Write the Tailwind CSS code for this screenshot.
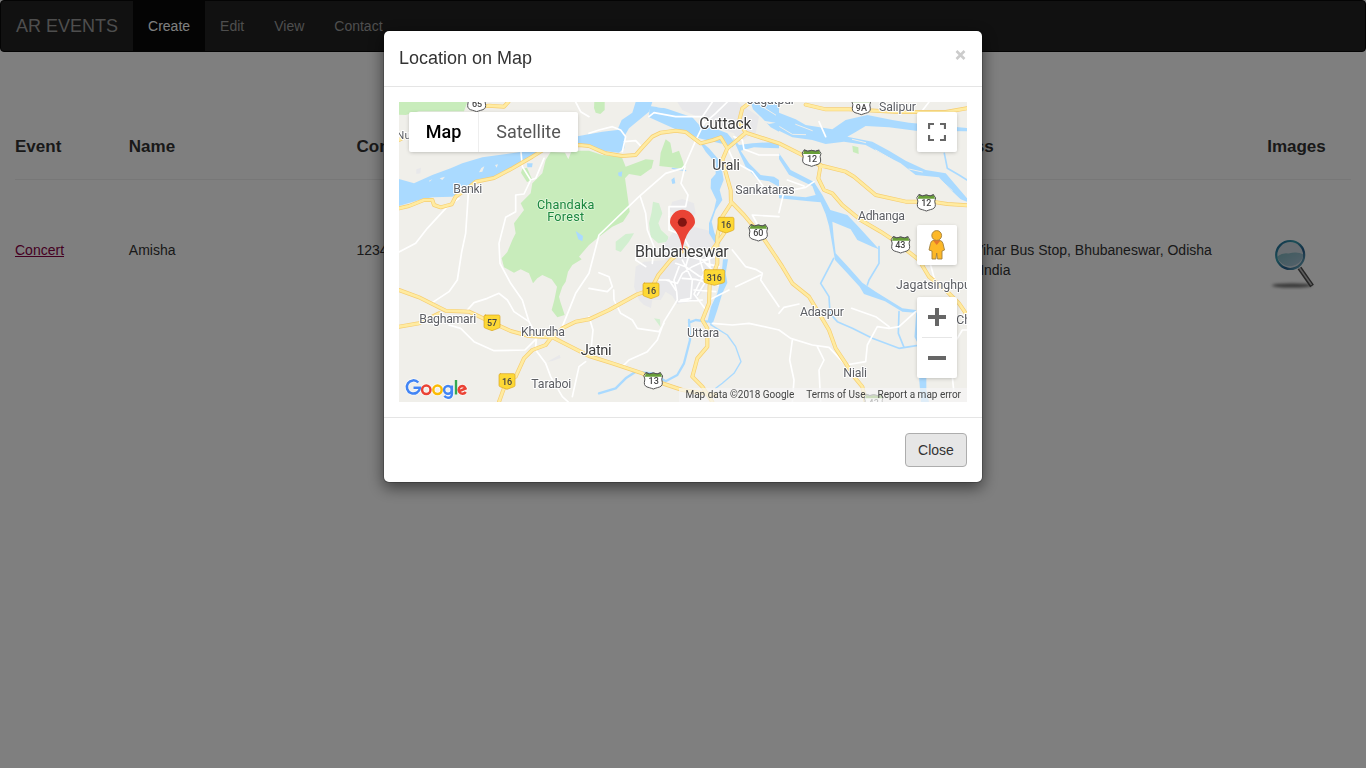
<!DOCTYPE html>
<html lang="en">
<head>
<meta charset="utf-8">
<title>AR Events</title>
<script src="https://cdn.jsdelivr.net/npm/@tailwindcss/browser@4"></script>
</head>
<body class="h-screen overflow-hidden bg-white font-['Liberation_Sans',Arial,sans-serif] text-[14px] leading-5 text-[#333]">
<nav class="flex h-[52px] rounded-[4px] border border-[#080808] bg-[#222] text-[#9d9d9d]">
  <a class="flex items-center px-[15px] text-[18px]">AR EVENTS</a>
  <a class="flex items-center bg-[#080808] px-[15px] text-white">Create</a>
  <a class="flex items-center px-[15px]">Edit</a>
  <a class="flex items-center px-[15px]">View</a>
  <a class="flex items-center px-[15px]">Contact</a>
</nav>
<main>
  <div class="grid grid-cols-12 pt-[85px] text-[17px] font-bold">
    <div class="px-[15px]">Event</div>
    <div class="col-span-2 px-[15px]">Name</div>
    <div class="col-span-5 px-[15px]">Contact</div>
    <div class="col-span-3 px-[15px]">Address</div>
    <div class="px-[15px]">Images</div>
  </div>
  <hr class="mx-[15px] mt-[22px] border-t border-[#eee]">
  <div class="grid grid-cols-12 pt-[60px]">
    <div class="px-[15px]"><a class="text-[#8a0045] underline">Concert</a></div>
    <div class="col-span-2 px-[15px]">Amisha</div>
    <div class="col-span-5 px-[15px]">1234567890</div>
    <div class="col-span-3 px-[15px] whitespace-nowrap">Ananta Vihar Bus Stop, Bhubaneswar, Odisha<br>751004, India</div>
    <div class="px-[15px]">
      <svg class="-mt-[5px] block" width="50" height="55" viewBox="1267 235 50 55">
        <defs>
          <linearGradient id="lens" x1="0" y1="0" x2="1" y2="1"><stop offset="0" stop-color="#7cb4bc"/><stop offset="1" stop-color="#aac4d8"/></linearGradient>
          <linearGradient id="rim" x1="0" y1="0" x2="1" y2="1"><stop offset="0" stop-color="#1a5c90"/><stop offset=".35" stop-color="#38a0b0"/><stop offset=".65" stop-color="#245c8c"/><stop offset="1" stop-color="#82c4cc"/></linearGradient>
          <filter id="soft" x="-20%" y="-100%" width="140%" height="300%"><feGaussianBlur stdDeviation="1.5"/></filter>
        </defs>
        <ellipse cx="1292" cy="285.500" rx="20" ry="2" fill="#666" filter="url(#soft)"/>
        <path d="M1299.500 268L1312 286" stroke="#4c4c4c" stroke-width="4.600"/>
        <path d="M1299.500 268L1311.500 285" stroke="#bbb" stroke-width="1.500"/>
        <circle cx="1290.200" cy="255" r="13.800" fill="#d2dde4"/>
        <path d="M1277 257Q1281.500 252.500 1288.500 253.500Q1297.500 251 1303.500 254.500A13.700 13.700 0 0 1 1277 257Z" fill="url(#lens)"/>
        <circle cx="1290.200" cy="255" r="14" fill="none" stroke="url(#rim)" stroke-width="2.200"/>
      </svg>
    </div>
  </div>
</main>

<div class="fixed inset-0 bg-black/50"></div>
<div class="fixed inset-0 flex items-start justify-center pt-[30px]">
  <section class="w-[600px] rounded-[6px] border border-black/20 bg-white bg-clip-padding shadow-[0_5px_15px_rgba(0,0,0,0.5)]">
    <header class="flex h-[56px] items-start justify-between border-b border-[#e5e5e5] px-[15px] pt-[14px]">
      <h4 class="text-[18px] leading-[26px]">Location on Map</h4>
      <svg class="mt-[5px]" width="12" height="10" viewBox="0 0 12 10"><path d="M1.500 1L9.500 9M9.500 1L1.500 9" stroke="#ccc" stroke-width="2.600"/></svg>
    </header>
    <div class="p-[15px]">
      <div class="relative h-[300px] overflow-hidden bg-[#f0efea] font-[Roboto,sans-serif]">
        <svg class="block" width="568" height="300" viewBox="0 6 1704 900" stroke-linejoin="round" stroke-linecap="round" font-family="Roboto,sans-serif">
          <defs>
            <g id="usr"><path d="M-21 -25Q-12 -18 0 -24Q12 -18 21 -25L28 -15Q23 -6 27 5Q28 17 12 20Q5 22 0 24Q-5 22 -12 20Q-28 17 -27 5Q-23 -6 -28 -15Z" fill="#fff" stroke="#555" stroke-width="3"/><path d="M-22 -24Q-12 -18 0 -24Q12 -18 22 -24L26 -13H-26Z" fill="#689f38"/><path d="M-22 -24Q-12 -18 0 -24Q12 -18 22 -24" fill="none" stroke="#555" stroke-width="3"/></g>
            <path id="nh" d="M-20 -23H20Q24 -23 24 -18V12Q24 16 19 17L0 24L-19 17Q-24 16 -24 12V-18Q-24 -23 -20 -23Z" fill="#fdd835" stroke="#d9a520" stroke-width="2"/>
            <path id="nhw" d="M-26 -23H26Q31 -23 31 -18V12Q31 16 26 17L0 24L-26 17Q-31 16 -31 12V-18Q-31 -23 -26 -23Z" fill="#fdd835" stroke="#d9a520" stroke-width="2"/>
          </defs>
          <!-- forests -->
          <g fill="#c8ecbb">
            <path d="M0 6H205L195 34H60L20 45L0 44Z"/>
            <path d="M586 6H617V30L604 42L590 38L585 24Z"/>
            <path d="M455 156L498 158L508 178L518 152H570L610 165L668 170L680 200L740 178L764 180L758 205L725 228L690 222L678 235L688 305L692 335L672 365L640 380L600 410L570 435L540 470L548 478L520 495L507 515L500 545L490 560L480 590L484 605L497 645L475 652L458 630L466 600L474 560L458 538L430 525L415 535L402 550L390 520L365 508L345 518L315 502L308 475L325 456L340 420L350 400L345 370L375 330L365 310L395 280L400 250L430 220L440 180Z"/>
            <path d="M370 206L384 203L400 240L384 246L366 218Z"/>
            <path d="M800 118L814 128L820 160L840 152L852 185L857 208L815 202L781 198L785 158Z"/>
            <path d="M1360 137L1378 142L1379 162L1362 156Z"/>
            <g fill="#d2efd0"><path d="M762 305L780 310L790 340L778 370L786 390L808 410L805 425L778 430L755 410L750 370L758 335Z"/><path d="M650 425L680 402L705 400L690 425L665 456L650 450Z"/><path d="M765 655L783 658L784 680Z"/><path d="M768 510L785 525L778 540L765 530Z"/></g>
          </g>
          <!-- urban areas -->
          <g fill="#e8e8ea">
            <path d="M820 305L850 297L885 310L890 340L870 375L900 385L945 395L960 450L945 500L920 560L890 602L835 612L820 588L800 575L785 600L760 600L756 624L735 615L720 600L705 560L710 500L735 485L800 480L790 440L820 400L838 350L810 330Z"/>
            <path d="M835 6H1015L1080 50L1070 100L1045 110L1020 128L1005 100L960 85L940 58L895 50L850 30Z"/>
            <path d="M445 785L482 764L485 774L460 783ZM52 208L66 203L64 220L52 222Z"/>
          </g>
          <!-- water -->
          <g fill="#aadaff">
            <path d="M0 237L45 250L100 225L155 205L190 190L250 172L300 165L370 155L440 115L540 108L610 95L655 90L668 60L700 38L710 6H760L750 35L720 60L690 85L678 106L676 145L660 158L590 150L537 132L450 132L400 165L345 200L300 228L235 245L200 262L160 290L100 292L60 300L0 318Z"/>
            <path d="M752 18L800 25L850 42L880 52L900 74L950 86L985 100L1010 130L1000 142L975 133L900 115L830 88L750 52Z"/>
            <path d="M897 118L930 145L960 180L968 205L974 240L962 270L970 300L950 330L938 365L946 398L965 430L950 432L930 400L930 370L945 330L952 300L935 265L936 238L950 222L950 190L920 155Z"/>
            <path d="M985 478H987L980 520L985 548L970 580L955 630L940 674L925 665L936 620L955 580L967 530L972 478Z"/>
            <path d="M1000 112L1020 135L1060 130L1140 125L1140 145L1065 142L1025 152L1050 190L1085 225L1125 230L1140 240V260L1110 244L1075 238L1040 200Z"/>
            <path d="M1055 6H1140V95L1115 82L1090 55L1062 28Z"/>
            <path d="M1140 38L1190 58L1220 75L1300 88L1340 60L1405 45L1480 60L1530 68L1704 84V94L1550 92L1470 82L1400 78L1370 96L1345 110L1420 125L1470 152L1520 182L1580 210L1640 220L1704 295V305L1685 298L1650 265L1620 232L1550 225L1505 190L1450 162L1400 135L1335 125L1280 132L1240 120L1180 112L1140 92Z"/>
            <path d="M1140 160L1175 210L1245 246L1270 285L1294 330L1345 345L1380 382L1410 415L1440 448L1420 440L1375 420L1355 388L1300 365L1304 410L1310 460L1350 503L1390 548L1430 575L1510 625L1551 630V638L1510 635L1458 604L1395 582L1382 560L1345 520L1308 480L1290 378L1280 343L1265 307L1230 304L1140 295V285L1220 292L1250 285L1240 258L1170 224L1140 177Z"/>
            <path d="M1560 830L1582 832L1582 870L1590 906H1566ZM384 190L401 190L399 202L385 202ZM817 239L826 232L829 250L820 252ZM530 393L552 408L550 424L538 418ZM657 218L670 214L668 230L659 228Z"/>
          </g>
          <g fill="none" stroke="#aadaff" stroke-width="5">
            <path d="M1636 160L1645 205L1680 225L1704 240M1304 475L1265 550L1290 590L1293 640L1315 665L1360 685L1420 715L1500 745L1552 737M1500 635L1498 700L1515 742M1440 440L1440 490L1410 540L1405 555"/>
            <path stroke-width="7" d="M870 668L890 660L925 665M870 660L873 720L855 790L835 825L800 844L760 820L710 815L680 835L650 865L600 880M1555 640L1550 710L1570 750"/>
            <path stroke-width="4" d="M935 674L985 705L1010 740L1026 785L1005 820L970 850L950 865M820 205L860 212"/>
          </g>
          <g fill="#f0efea"><path d="M90 242L100 238L92 245ZM122 235L138 230L130 240ZM247 204L256 199L250 215L240 217ZM288 195L297 193L293 203ZM780 10L830 15L822 27L775 22ZM1080 60L1130 68L1110 72Z"/></g>
          <g fill="none" stroke="#f0efea" stroke-width="3"><path d="M1190 73L1240 92M1430 150L1475 176L1510 200M1360 118L1400 128M1530 207L1570 216M1630 245L1660 272M1142 80L1180 103L1220 104M1090 20L1130 45"/></g>
          <!-- local roads -->
          <g fill="none" stroke="#fff" stroke-width="5">
            <path d="M208 280L200 400L188 456L175 540L150 575L100 608M180 295L140 325L85 385L50 430L0 456M366 156L370 200L395 240L410 235L435 175M395 240L375 282L350 285V335L320 352L300 430L303 490L335 550L370 600L390 665L412 705L410 750L440 790L455 830L490 890L508 906"/>
            <path d="M205 630L225 608L265 595L300 580L325 600L345 635L390 665M150 675L185 685L225 725L285 752L378 750L410 718M490 680L530 580L570 520L600 405L720 290L800 220L850 205L858 195L890 122L915 70L950 40L985 6"/>
            <path d="M858 200L846 250L867 285L860 320H810V350M724 290L740 340L745 390L765 440L760 490M840 500L825 540L833 575L835 600L795 665L775 720L745 755L690 780L670 800M570 565L625 575L640 560L630 530L600 518M644 570L645 600L665 640L700 660L715 685L780 695L795 670M570 650L582 690L575 760"/>
            <path d="M570 100L600 90L640 80L665 90L680 110L670 155M676 125L710 122L724 137M750 50L765 38L830 50L910 50L940 6M910 50L915 72M978 127L1005 185L1060 215L1095 262L1140 272M1005 110L1030 120L1035 148L1080 165L1140 165M950 58L1000 60L1035 90M530 6L545 35L570 50"/>
            <path d="M1000 450L1040 500L1070 508L1090 520L1085 540L1130 605L1140 620M930 600L990 570M1010 560L1085 525M940 670L1000 675L1050 670L1140 690M740 500L710 480L715 460L760 450L820 455M1090 400L1060 345L1140 350M1140 338L1155 275L1220 262L1245 245M1165 240L1215 258M1140 640L1155 622L1200 612M1140 690L1175 715L1240 735L1290 742L1340 795L1400 785L1405 735L1435 680L1470 685L1500 680L1550 635M1358 625L1430 650L1470 680M1180 720L1172 780L1185 840L1180 906M1255 740L1275 780L1260 810L1265 906M1585 460L1610 550M1660 740L1690 690L1704 690M1660 830L1665 880M1565 38L1590 6M1260 65L1280 110M520 890L540 800L560 785"/>
          </g>
          <g fill="none" stroke="#fff" stroke-width="5">
            <path d="M810 350V390L850 405L870 440M800 540L835 550L850 520L880 500L935 475M830 490L860 500L900 528L958 555M850 480L880 540L875 595L845 600M900 470L915 520L885 582L923 632M930 470L935 520L895 585M870 470L910 480L950 470M820 460L860 455L900 470L950 520M780 540H810L830 570M875 595L840 605L910 600M950 575L885 570M860 500L870 465M920 490L960 500M850 535L890 538L930 550"/>
          </g>
          <!-- highways -->
          <g fill="none">
            <g stroke="#f6ce72" stroke-width="12">
              <path d="M0 325L30 318L75 300L100 300L105 315L125 322L158 313L170 290L210 262L230 245L285 234L340 205L400 170L440 145L540 135L570 138L620 160L670 168L710 165L730 142L760 110L785 98L830 92L860 96L885 115L905 130L943 120L965 112L985 145L970 180L985 235L995 270L996 310L970 350L975 400L940 450M230 6V22L270 17L315 20L328 6M0 570L60 592L140 632L210 635L280 668L335 693L390 708L460 712L535 750L570 768L640 790L730 820L760 840L850 870L950 885M0 680L60 670L120 640M462 712L490 685L530 665L570 658L630 630L715 583L755 570L778 525L815 480L860 445M455 715L440 735L400 750L375 775L350 830L320 850L300 906"/>
              <path d="M996 305L1035 345L1060 375L1090 410L1125 462L1150 500L1180 550L1230 590L1260 640L1290 690L1310 745L1340 790L1365 830L1390 860L1400 906M965 360L955 410L955 490L932 555L930 610L910 660L925 685L925 740L895 775L880 830L910 860L940 906M985 145L1015 120L1040 98L1140 130L1210 165L1260 195L1340 215L1365 230L1430 285L1520 305L1600 305L1645 312L1704 316M1265 195L1258 235L1275 270L1300 280L1330 315L1385 360L1445 395L1490 425L1560 480L1590 530L1640 570L1680 610L1704 645M1040 98L1020 65L1030 25L1055 6M1220 14L1280 28H1350L1500 36H1640L1704 25M0 120L15 112"/>
            </g>
            <g stroke="#ffeba1" stroke-width="8">
              <path d="M0 325L30 318L75 300L100 300L105 315L125 322L158 313L170 290L210 262L230 245L285 234L340 205L400 170L440 145L540 135L570 138L620 160L670 168L710 165L730 142L760 110L785 98L830 92L860 96L885 115L905 130L943 120L965 112L985 145L970 180L985 235L995 270L996 310L970 350L975 400L940 450M230 6V22L270 17L315 20L328 6M0 570L60 592L140 632L210 635L280 668L335 693L390 708L460 712L535 750L570 768L640 790L730 820L760 840L850 870L950 885M0 680L60 670L120 640M462 712L490 685L530 665L570 658L630 630L715 583L755 570L778 525L815 480L860 445M455 715L440 735L400 750L375 775L350 830L320 850L300 906"/>
              <path d="M996 305L1035 345L1060 375L1090 410L1125 462L1150 500L1180 550L1230 590L1260 640L1290 690L1310 745L1340 790L1365 830L1390 860L1400 906M965 360L955 410L955 490L932 555L930 610L910 660L925 685L925 740L895 775L880 830L910 860L940 906M985 145L1015 120L1040 98L1140 130L1210 165L1260 195L1340 215L1365 230L1430 285L1520 305L1600 305L1645 312L1704 316M1265 195L1258 235L1275 270L1300 280L1330 315L1385 360L1445 395L1490 425L1560 480L1590 530L1640 570L1680 610L1704 645M1040 98L1020 65L1030 25L1055 6M1220 14L1280 28H1350L1500 36H1640L1704 25M0 120L15 112"/>
            </g>
          </g>
          <!-- route shields -->
          <use href="#usr" x="233" y="11"/><use href="#usr" x="1387" y="20"/><use href="#usr" x="1238" y="175"/><use href="#usr" x="1582" y="309"/><use href="#usr" x="1505" y="435"/><use href="#usr" x="1078" y="399"/><use href="#usr" x="763" y="843"/><use href="#usr" x="1424" y="908"/>
          <use href="#nh" x="981" y="375"/><use href="#nh" x="756" y="572"/><use href="#nh" x="279" y="668"/><use href="#nh" x="324" y="844"/><use href="#nhw" x="946" y="532"/>
          <g font-size="27" font-weight="500" fill="#444" text-anchor="middle">
            <text x="234" y="21">65</text><text x="1387" y="32">9A</text><text x="1239" y="185">12</text><text x="1582" y="319">12</text><text x="1504" y="445">43</text><text x="1078" y="409">60</text><text x="764" y="853">13</text><text x="1424" y="918">43</text><text x="981" y="385">16</text><text x="756" y="582">16</text><text x="279" y="678">57</text><text x="324" y="855">16</text><text x="946" y="543">316</text>
          </g>
          <!-- place names -->
          <g fill="#5d5f64" stroke="#fff" stroke-width="6" paint-order="stroke" font-size="37">
            <text x="-8" y="117" font-size="34">Nuagaon</text>
            <text x="163" y="280" textLength="87">Banki</text>
            <text x="1009" y="283" textLength="178">Sankataras</text>
            <text x="1440" y="32" textLength="111">Salipur</text>
            <text x="1044" y="11" textLength="144">Jagatpur</text>
            <text x="1377" y="361" textLength="141">Adhanga</text>
            <text x="1491" y="566">Jagatsinghpur</text>
            <text x="61" y="668" textLength="171">Baghamari</text>
            <text x="366" y="707" textLength="132">Khurdha</text>
            <text x="397" y="863" textLength="120">Taraboi</text>
            <text x="864" y="710" textLength="97">Uttara</text>
            <text x="1203" y="647" textLength="132">Adaspur</text>
            <text x="1333" y="830" textLength="71">Niali</text>
            <text x="1672" y="673">Chandol</text>
          </g>
          <g fill="#3c3c3c" stroke="#fff" stroke-width="6" paint-order="stroke">
            <text x="901" y="86" font-size="47" textLength="156">Cuttack</text>
            <text x="940" y="211" font-size="42" textLength="83">Urali</text>
            <text x="545" y="764" font-size="44" textLength="93">Jatni</text>
            <text x="708" y="472" font-size="48" textLength="281">Bhubaneswar</text>
          </g>
          <g fill="#1b873f" stroke="#e3f6db" stroke-width="5" paint-order="stroke" font-size="38" text-anchor="middle">
            <text x="500" y="326" textLength="172">Chandaka</text><text x="500" y="364" textLength="111">Forest</text>
          </g>
          <path d="M850 456Q848 418 830 393Q813 376 813 367A37 37 0 0 1 888 367Q888 376 871 393Q853 418 850 456Z" fill="#ea4335"/><circle cx="850" cy="367" r="13.500" fill="#811411"/>
        </svg>
        <div class="absolute top-[10px] left-[10px] flex h-[40px] rounded-[2px] bg-white text-[18px] leading-[40px] text-[#565656] shadow-[0_1px_4px_-1px_rgba(0,0,0,0.3)]">
          <span class="w-[70px] border-r border-[#eee] text-center font-medium text-black">Map</span><span class="w-[99px] text-center">Satellite</span>
        </div>
        <div class="absolute top-[10px] right-[10px] flex size-[40px] items-center justify-center rounded-[2px] bg-white shadow-[0_1px_4px_-1px_rgba(0,0,0,0.3)]">
          <svg width="18" height="18" viewBox="0 0 18 18" fill="none" stroke="#666" stroke-width="2.200"><path d="M1 6V1H6M12 1H17V6M17 12V17H12M6 17H1V12"/></svg>
        </div>
        <div class="absolute top-[123px] right-[10px] flex size-[40px] items-center justify-center rounded-[2px] bg-white shadow-[0_1px_4px_-1px_rgba(0,0,0,0.3)]">
          <svg width="18" height="30" viewBox="0 0 18 30"><path d="M5 10.500H12Q14.500 11 15 13.500L16.500 20L14 21V29H9.500L8.700 23L7.900 29H4V21L1 20L2.500 13.500Q3 11 5 10.500Z" fill="#fdb827" stroke="#a08040" stroke-width=".9"/><circle cx="8.700" cy="5.500" r="4.900" fill="#fdb827" stroke="#a08040" stroke-width=".9"/><path d="M5 10.500H12.500L8.700 15Z" fill="#e5782c"/></svg>
        </div>
        <div class="absolute top-[195px] right-[10px] flex h-[81px] w-[40px] flex-col items-center rounded-[2px] bg-white shadow-[0_1px_4px_-1px_rgba(0,0,0,0.3)]">
          <svg class="mt-[11px]" width="18" height="18" viewBox="0 0 18 18"><path d="M7 0H11V7H18V11H11V18H7V11H0V7H7Z" fill="#666"/></svg>
          <div class="mt-[11px] h-px w-[30px] bg-[#e6e6e6]"></div>
          <div class="mt-[18px] h-[4px] w-[18px] bg-[#666]"></div>
        </div>
        <svg class="absolute bottom-0 left-[5px]" width="66" height="26" viewBox="0 0 66 26" fill="none">
          <g stroke="#fff" stroke-opacity=".7" stroke-width="4"><path d="M14.300 6.500A6.600 6.600 0 1 0 16 11.800H9.500"/><circle cx="22.300" cy="13.800" r="4.200"/><circle cx="33.500" cy="13.800" r="4.200"/><circle cx="44" cy="13.800" r="3.900"/><path d="M47.900 9.500V18Q47.700 21.800 44 21.800Q41.500 21.800 40.500 19.800M52 4V18.500"/><path d="M54.800 15.300L61.500 12.500Q60.500 9.900 58.200 9.900A3.900 3.900 0 1 0 61.800 16"/></g>
          <g stroke-width="2.500"><path d="M14.300 6.500A6.600 6.600 0 1 0 16 11.800H9.500" stroke="#4285f4"/><circle cx="22.300" cy="13.800" r="4.200" stroke="#ea4335"/><circle cx="33.500" cy="13.800" r="4.200" stroke="#fbbc05"/><g stroke="#4285f4"><circle cx="44" cy="13.800" r="3.900"/><path d="M47.900 9.500V18Q47.700 21.800 44 21.800Q41.500 21.800 40.500 19.800"/></g><path d="M52 4V18.500" stroke="#34a853"/><path d="M54.800 15.300L61.500 12.500Q60.500 9.900 58.200 9.900A3.900 3.900 0 1 0 61.800 16" stroke="#ea4335"/></g>
        </svg>
        <div class="absolute right-0 bottom-0 flex h-[14px] bg-[#f5f5f5]/70 text-[10px] leading-[14px] whitespace-nowrap text-[#444]">
          <span class="px-[6px]">Map data ©2018 Google</span><span class="px-[6px]">Terms of Use</span><span class="px-[6px]">Report a map error</span>
        </div>
      </div>
    </div>
    <footer class="flex justify-end border-t border-[#e5e5e5] p-[15px]">
      <button class="h-[34px] w-[62px] rounded-[4px] border border-[#adadad] bg-[#e6e6e6] text-[14px]">Close</button>
    </footer>
  </section>
</div>
</body>
</html>
